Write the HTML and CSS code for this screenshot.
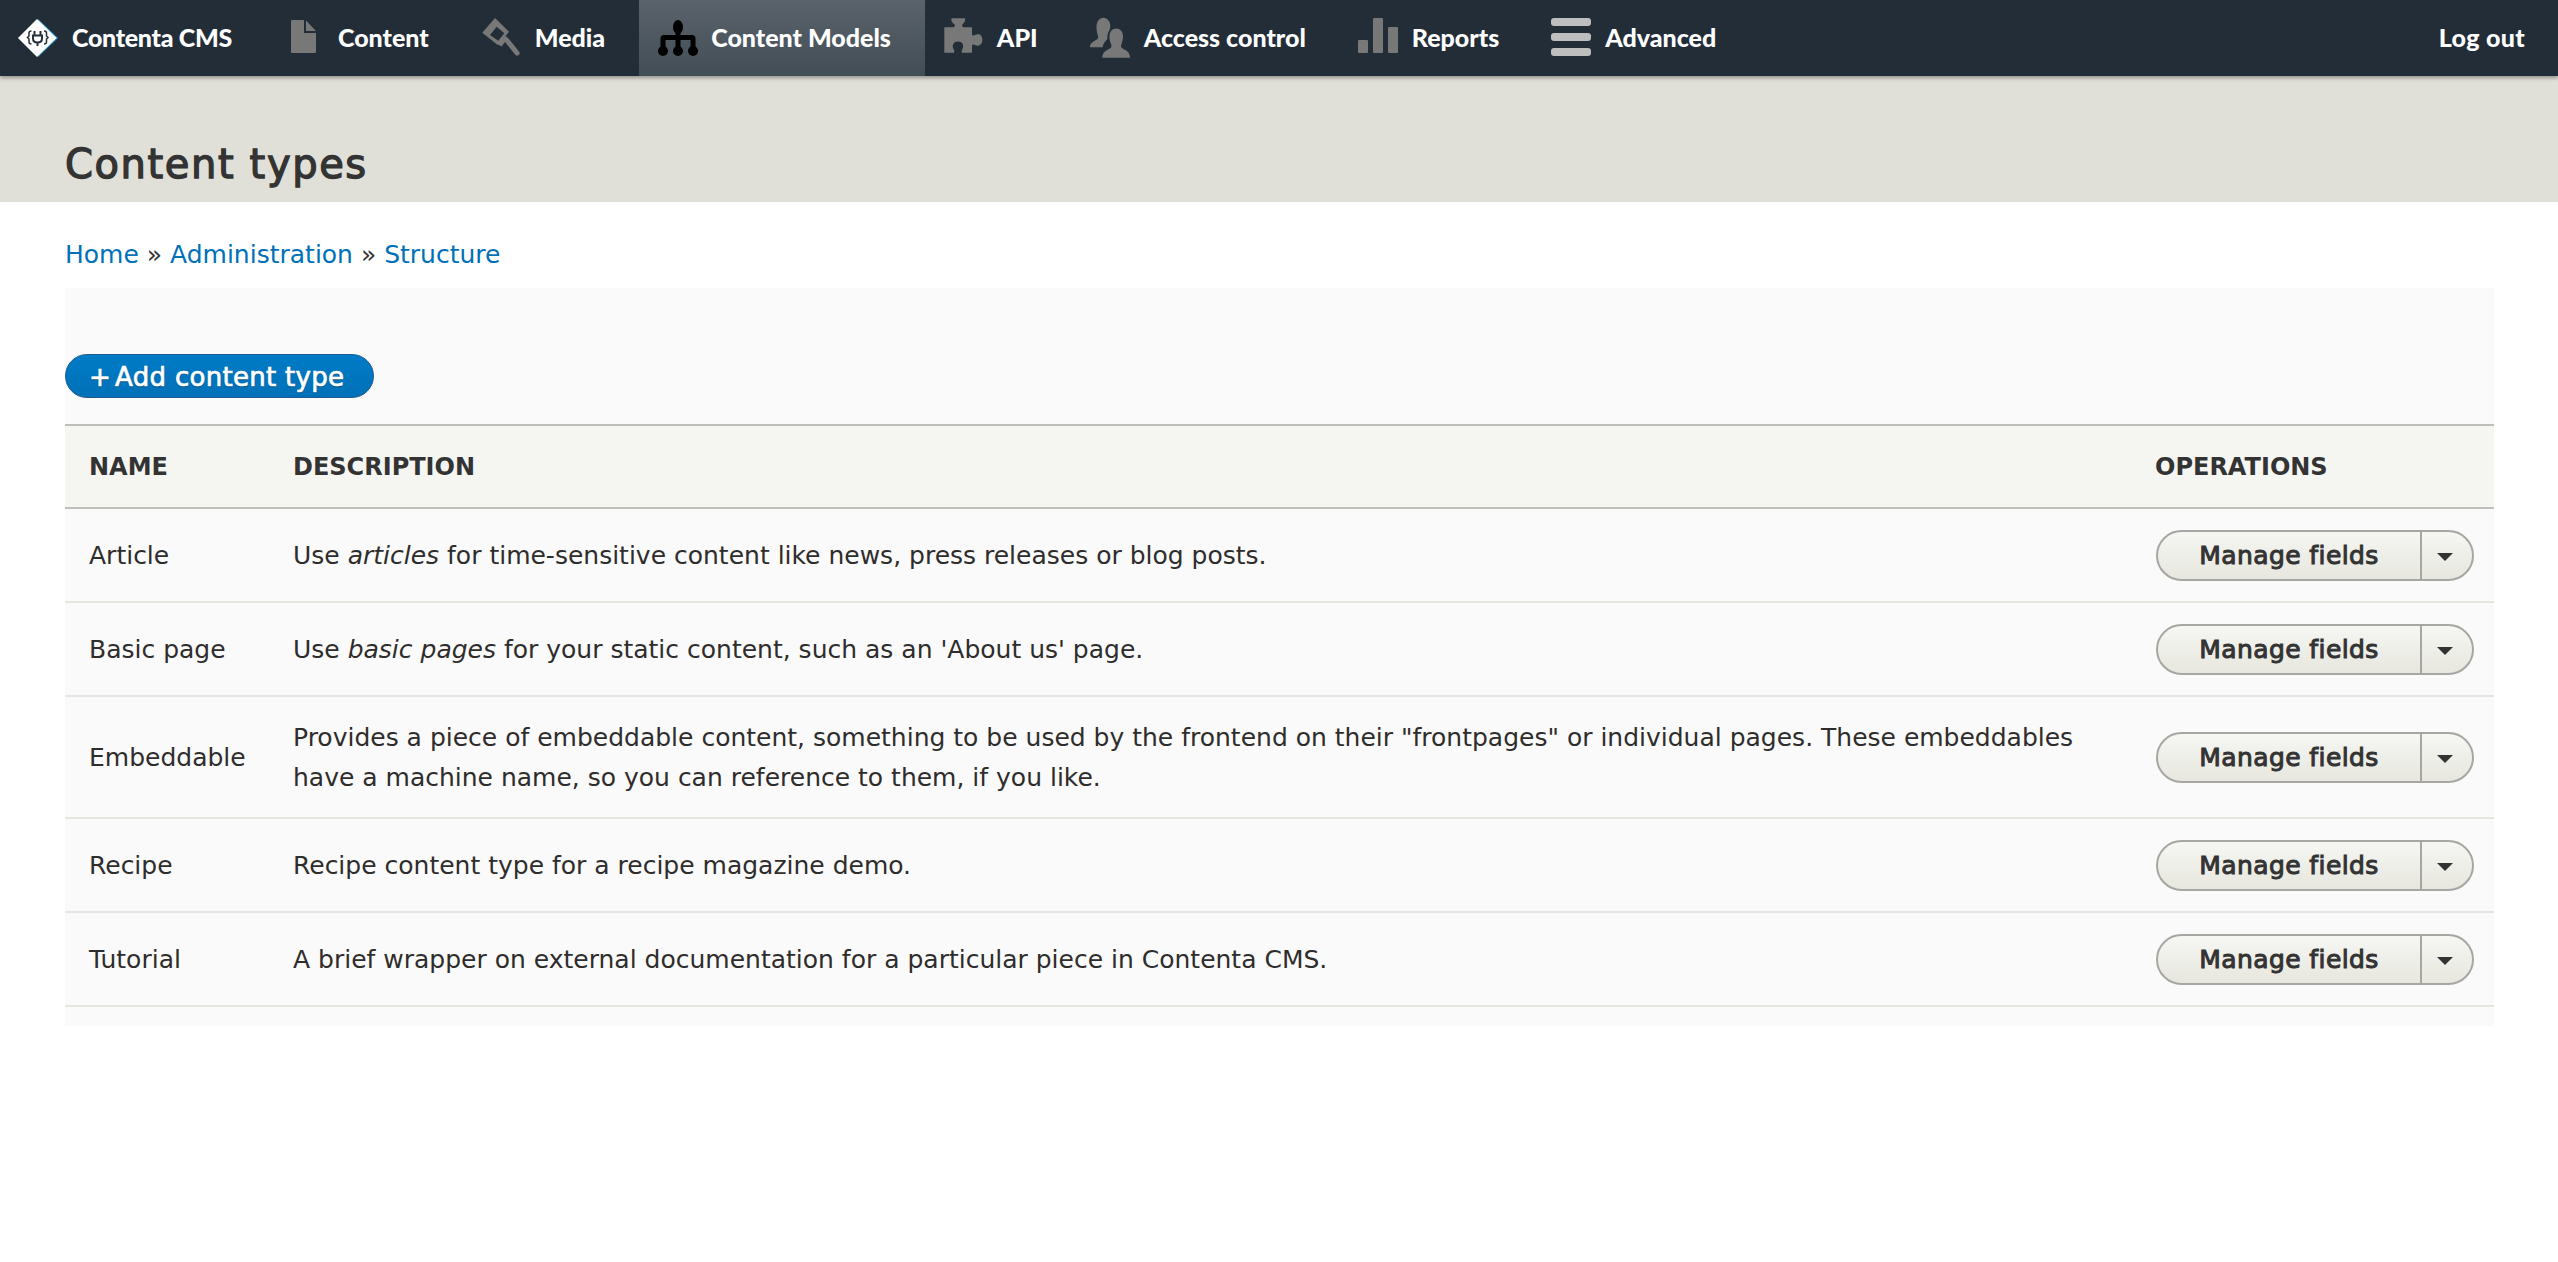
FILE: index.html
```html
<!DOCTYPE html>
<html lang="en">
<head>
<meta charset="utf-8">
<title>Content types</title>
<link rel="stylesheet" href="styles.css">
</head>
<body>
<nav class="toolbar">
  <a class="item brand" href="#">
    <svg class="icon" viewBox="0 0 40 38"><path fill="#2a9fd6" d="M20 0l20 19-20 19z"/><path fill="#fff" d="M19 0l19.500 19L19 38 0 19z"/><path fill="none" stroke="#24303a" stroke-width="1.500" d="M13.500 12c-1.800 0-2.500.8-2.500 2v3l-1.500 1.500L11 20v3c0 1.200.7 2 2.500 2M26 12c1.800 0 2.500.8 2.500 2v3l1.500 1.500L28.500 20v3c0 1.200-.7 2-2.500 2"/><path fill="none" stroke="#24303a" stroke-width="2" d="M16.500 12v5M22.500 12v5M15 16.500h9v3c0 2.500-2 4-4.500 4S15 22 15 19.500zM19.500 23.500V27"/></svg>
    <span>Contenta CMS</span>
  </a>
  <a class="item" href="#">
    <svg class="icon" viewBox="0 0 40 38"><path fill="#787878" d="M7 2q0-1 1-1h12v13h12v19q0 1-1 1H8q-1 0-1-1zM22 1.500L32 12H22z"/></svg>
    <span>Content</span>
  </a>
  <a class="item" href="#">
    <svg class="icon" viewBox="0 0 40 38"><path fill="#787878" fill-rule="evenodd" d="M14-1L28 12.700 24.500 17 28 20 38 32.500c1 1.500.8 2.500-.3 3.500-1.200 1-2.400.8-3.400-.3L24 23 20.500 27.500 17 25.500 16.700 26 1.300 13.700zM15.700 7.700L9 16l8.300 5.700 6-7.400z"/></svg>
    <span>Media</span>
  </a>
  <a class="item item-active" href="#">
    <svg class="icon" viewBox="0 0 40 38"><g fill="#000"><ellipse cx="21" cy="8" rx="5" ry="7"/><circle cx="6" cy="32" r="5"/><circle cx="21" cy="32" r="5"/><circle cx="36" cy="32" r="5"/><path d="M18.500 12h5v4h11.500q3.500 0 3.500 3.500V30H33.500v-9H23.500v9h-5v-9H8.500v9H3.500V19.500Q3.500 16 7 16h11.500z"/></g></svg>
    <span>Content Models</span>
  </a>
  <a class="item" href="#">
    <svg class="icon" viewBox="0 0 40 38"><path fill="#787878" d="M1.300 9q0-.7.7-.7h7q3 0 3-2.300-4-3-3.700-6 0-.7.700-.7h12.700q.6 0 .6.700.2 3-3.300 6 0 2.300 3 2.300h7v7.200q1 1.500 3 .5 2-1 4-.7c4 .7 5 9.700 0 11.200q-2 .5-4-.5-2-1-3 .5v7.200H19q-1-1.700.5-3.700c2-4-.5-7.500-4.500-7.500s-6.500 3.500-4.500 7.500q1.500 2 .5 3.700H1.300z"/></svg>
    <span>API</span>
  </a>
  <a class="item" href="#">
    <svg class="icon" viewBox="0 0 40 38"><g fill="#787878"><path d="M12.300 38.700c0-4.700 2.700-6.700 6.700-8.700 2.500-1 3-3 2-5-1.500-3-1.500-6-1.500-8 0-4.500 3-7.500 6.800-7.500 3.700 0 6.700 3 6.700 7.500 0 2-.5 5-1.500 8-1 2-.5 4 2 5 4 2 6.500 4 6.500 8.700z"/><path d="M0 28.300c0-3.800 2.500-5.300 6-7.300 2-1 2.500-2.500 2-4-1-2.500-1.500-6.500-1.500-9 0-5.500 3-9.300 7-9.300s6.800 3.800 6.800 8.300c0 2-.5 3.500-1.300 5-1.500 2-2 6-1.500 8-2.500 2-4.500 5-5 8.300z"/></g></svg>
    <span>Access control</span>
  </a>
  <a class="item" href="#">
    <svg class="icon" viewBox="0 0 40 38"><g fill="#787878"><rect x="0" y="21" width="10" height="13" rx="1"/><rect x="15" y="-1" width="10" height="35" rx="1"/><rect x="30" y="8" width="10" height="26" rx="1"/></g></svg>
    <span>Reports</span>
  </a>
  <a class="item" href="#">
    <svg class="icon" viewBox="0 0 40 38"><g fill="#bebebe"><rect x="0" y="-1" width="40" height="8" rx="3"/><rect x="0" y="14" width="40" height="8" rx="3"/><rect x="0" y="29" width="40" height="8" rx="3"/></g></svg>
    <span>Advanced</span>
  </a>
  <a class="logout" href="#"><span>Log out</span></a>
</nav>
<header class="page-head">
  <h1>Content types</h1>
</header>
<main class="page">
  <div class="crumbs"><a href="#">Home</a> » <a href="#">Administration</a> » <a href="#">Structure</a></div>
  <section class="panel">
    <a class="add" href="#"><span class="plus">+</span>Add content type</a>
    <table class="types">
      <thead>
        <tr><th class="c-name">Name</th><th class="c-desc">Description</th><th class="c-ops">Operations</th></tr>
      </thead>
      <tbody>
        <tr><td>Article</td><td>Use <em>articles</em> for time-sensitive content like news, press releases or blog posts.</td><td><div class="drop"><a href="#">Manage fields</a><button type="button" aria-label="List additional actions"></button></div></td></tr>
        <tr><td>Basic page</td><td>Use <em>basic pages</em> for your static content, such as an 'About us' page.</td><td><div class="drop"><a href="#">Manage fields</a><button type="button" aria-label="List additional actions"></button></div></td></tr>
        <tr><td>Embeddable</td><td>Provides a piece of embeddable content, something to be used by the frontend on their "frontpages" or individual pages. These embeddables have a machine name, so you can reference to them, if you like.</td><td><div class="drop"><a href="#">Manage fields</a><button type="button" aria-label="List additional actions"></button></div></td></tr>
        <tr><td>Recipe</td><td>Recipe content type for a recipe magazine demo.</td><td><div class="drop"><a href="#">Manage fields</a><button type="button" aria-label="List additional actions"></button></div></td></tr>
        <tr><td>Tutorial</td><td>A brief wrapper on external documentation for a particular piece in Contenta CMS.</td><td><div class="drop"><a href="#">Manage fields</a><button type="button" aria-label="List additional actions"></button></div></td></tr>
      </tbody>
    </table>
  </section>
</main>
</body>
</html>
```

FILE: styles.css
```css
* { box-sizing: border-box; }
html, body { margin: 0; padding: 0; }
body {
  background: #fff;
  color: #2f2d2c;
  font-family: "DejaVu Sans", sans-serif;
  font-size: 25px;
  min-height: 1262px;
}
a { text-decoration: none; }

.toolbar {
  display: flex;
  align-items: stretch;
  height: 76px;
  background: #232d37;
  box-shadow: 0 2px 4px rgba(0, 0, 0, .35);
  position: relative;
  font-family: Lato, sans-serif;
  font-weight: 900;
  font-size: 25px;
  color: #fff;
}
.toolbar a { color: #fff; }
.toolbar span { padding-bottom: 3px; }
.item { display: flex; align-items: center; gap: 14px; padding: 0 34px 0 18px; }
.brand { letter-spacing: -.3px; }
.item-active { background: linear-gradient(#5a636c, #434d56); }
.icon { width: 40px; height: 38px; flex: none; overflow: visible; }
.logout { margin-left: auto; padding: 0 33px 0 0; display: flex; align-items: center; letter-spacing: .3px; }

.page-head {
  height: 126px;
  background: #e0e0d8;
  padding: 64px 65px 0;
}
.page-head h1 {
  margin: 0;
  font-size: 40px;
  line-height: 48px;
  font-weight: 400;
  letter-spacing: 1.6px;
  -webkit-text-stroke: 1.3px #333;
  color: #333;
}

.page { padding: 0 64px 0 65px; }
.crumbs { height: 86px; padding-top: 37px; line-height: 32px; color: #333; }
.crumbs a { color: #0071b8; }

.panel { background: #fafafa; height: 738px; padding-top: 66px; }
.add {
  display: block;
  height: 44px;
  width: 309px;
  border-radius: 22px;
  border: 1px solid #1e5c90;
  background: linear-gradient(#007bc6, #0071b8);
  color: #fff;
  padding: 0 23px;
  line-height: 44px;
  font-size: 26px;
  letter-spacing: .3px;
  -webkit-text-stroke: .7px #fff;
  text-shadow: 0 1px 1px rgba(0,0,0,.5);
}
.plus { margin-right: 4px; }

.types { margin-top: 26px; width: 100%; border-collapse: collapse; table-layout: fixed; }
.types th {
  background: #f5f5f2;
  border-top: 2px solid #bfbfba;
  border-bottom: 2px solid #bfbfba;
  height: 83px;
  padding: 0 24px;
  text-align: left;
  text-transform: uppercase;
  font-size: 24px;
  color: #333;
}
.c-name { width: 204px; }
.c-ops { width: 363px; }
.types td {
  border-bottom: 2px solid #e6e6e1;
  height: 94px;
  padding: 21px 24px 19px;
  line-height: 40px;
  color: #2f2d2c;
}

.drop {
  display: flex;
  width: 318px;
  height: 51px;
  margin-left: 1px;
  margin-top: -2px;
  border: 2px solid #a6a6a2;
  border-radius: 26px;
  background: linear-gradient(#f6f6f3, #e7e7df);
}
.drop a {
  flex: 1;
  text-align: center;
  line-height: 47px;
  font-size: 25px;
  letter-spacing: .4px;
  -webkit-text-stroke: 1px #333;
  color: #333;
}
.drop button {
  width: 52px;
  border: 0;
  border-left: 2px solid #a6a6a2;
  background: none;
  padding: 0;
  position: relative;
}
.drop button::after {
  content: "";
  position: absolute;
  left: 15px;
  top: 21px;
  border-top: 8px solid #333;
  border-left: 8px solid transparent;
  border-right: 8px solid transparent;
}
```
